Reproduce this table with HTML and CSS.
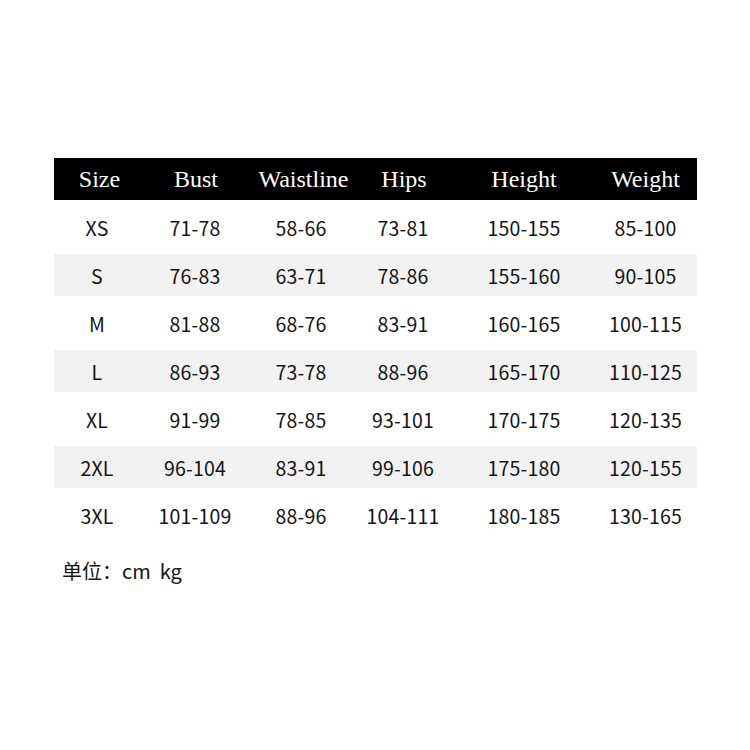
FILE: index.html
```html
<!DOCTYPE html>
<html lang="zh">
<head>
<meta charset="utf-8">
<title>Size chart</title>
<link rel="stylesheet" href="styles.css">
</head>
<body>
<div class="page">
  <div class="table">
    <div class="row head">
      <div class="c c1">Size</div><div class="c c2">Bust</div><div class="c c3">Waistline</div><div class="c c4">Hips</div><div class="c c5">Height</div><div class="c c6">Weight</div>
    </div>
    <div class="body">
      <div class="row"><div class="c">XS</div><div class="c">71-78</div><div class="c">58-66</div><div class="c">73-81</div><div class="c">150-155</div><div class="c">85-100</div></div>
      <div class="row alt"><div class="c">S</div><div class="c">76-83</div><div class="c">63-71</div><div class="c">78-86</div><div class="c">155-160</div><div class="c">90-105</div></div>
      <div class="row"><div class="c">M</div><div class="c">81-88</div><div class="c">68-76</div><div class="c">83-91</div><div class="c">160-165</div><div class="c">100-115</div></div>
      <div class="row alt"><div class="c">L</div><div class="c">86-93</div><div class="c">73-78</div><div class="c">88-96</div><div class="c">165-170</div><div class="c">110-125</div></div>
      <div class="row"><div class="c">XL</div><div class="c">91-99</div><div class="c">78-85</div><div class="c">93-101</div><div class="c">170-175</div><div class="c">120-135</div></div>
      <div class="row alt"><div class="c">2XL</div><div class="c">96-104</div><div class="c">83-91</div><div class="c">99-106</div><div class="c">175-180</div><div class="c">120-155</div></div>
      <div class="row"><div class="c">3XL</div><div class="c">101-109</div><div class="c">88-96</div><div class="c">104-111</div><div class="c">180-185</div><div class="c">130-165</div></div>
    </div>
  </div>
  <div class="unit">单位：cm<span class="gap"></span>kg</div>
</div>
</body>
</html>
```

FILE: styles.css
```css
html, body {
  margin: 0;
  padding: 0;
  background: #ffffff;
}
.page {
  width: 750px;
  height: 750px;
  padding: 158px 0 0 54px;
  box-sizing: border-box;
}
.table {
  width: 643px;
}
.row {
  display: grid;
  grid-template-columns: 86px 110px 102px 102px 140px 103px;
  height: 42px;
  align-items: center;
  font-family: "Noto Sans CJK SC", "Noto Sans", sans-serif;
  font-size: 19.5px;
  letter-spacing: 0.2px;
  color: #141414;
}
.c {
  text-align: center;
  white-space: nowrap;
}
.row.head {
  background: #000000;
  color: #ffffff;
  font-family: "Liberation Serif", "Times New Roman", serif;
  font-size: 24px;
  letter-spacing: 0;
}
.head .c1 { padding-left: 5px; }
.head .c2 { padding-left: 2px; }
.head .c3 { padding-left: 5px; }
.head .c4 { padding-left: 2px; }
.body {
  display: flex;
  flex-direction: column;
  gap: 6px;
  padding-top: 6px;
}
.body .row {
  padding-top: 1px;
  box-sizing: border-box;
}
.row.alt {
  background: #f2f2f2;
}
.unit {
  margin: 20px 0 0 8px;
  font-family: "Noto Sans CJK SC", "Noto Sans", sans-serif;
  font-size: 20px;
  color: #141414;
}
.gap {
  display: inline-block;
  width: 9px;
}
```
